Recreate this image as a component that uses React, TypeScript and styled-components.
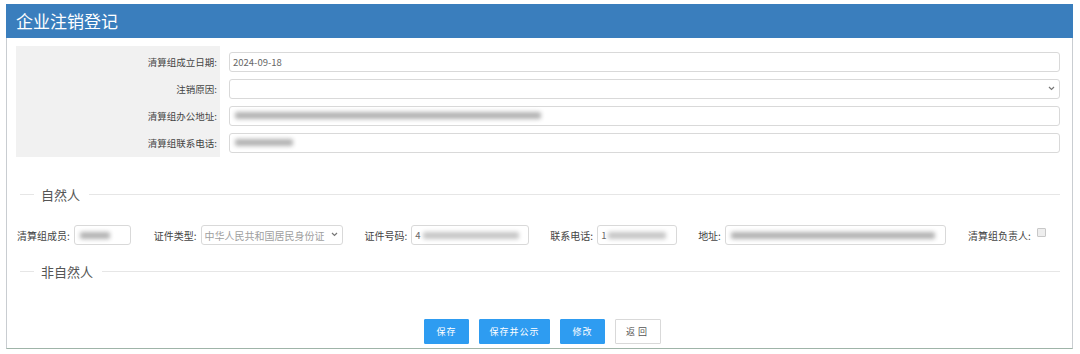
import React from "react"
import styled, { createGlobalStyle } from "styled-components"

const GlobalStyle = createGlobalStyle`
  body {
    margin: 0;
    background: #ffffff;
    font-family: "Noto Sans CJK SC", "Noto Sans", sans-serif;
    color: #333;
  }
`

const Panel = styled.div`
  margin: 4px 0 0 6px;
  width: 1067px;
  height: 345px;
  box-sizing: border-box;
  border: 1px solid #c9cdd1;
  border-top: none;
  border-bottom-color: #9fb4a8;
  display: flex;
  flex-direction: column;
`

const Header = styled.div`
  height: 34px;
  background: #3a7ebd;
  color: #ffffff;
  font-size: 17px;
  line-height: 34px;
  padding-left: 10px;
  margin: 0 -1px;
`

const TopBlock = styled.div`
  margin: 8px 12px 0 9px;
  padding: 2px 0 1px;
  display: grid;
  grid-template-columns: 204px 1fr;
  column-gap: 9px;
  background: linear-gradient(to right, #f1f1f1 204px, transparent 204px);
`

const TopLabel = styled.div`
  height: 27px;
  display: flex;
  align-items: center;
  justify-content: flex-end;
  padding-right: 3px;
  font-size: 9.5px;
  color: #444;
`

const TopCell = styled.div`
  height: 27px;
  display: flex;
  align-items: center;
`

const Field = styled.div<{ $w?: number }>`
  position: relative;
  box-sizing: border-box;
  height: 20px;
  width: ${(p) => (p.$w ? `${p.$w}px` : "100%")};
  border: 1px solid #d9d9d9;
  border-radius: 3px;
  background: #fff;
  display: flex;
  align-items: center;
  padding-left: 3px;
  font-size: 9.5px;
  color: #666;
  overflow: hidden;
  flex-shrink: 0;
`

const Chevron = styled.svg`
  position: absolute;
  right: 4px;
  top: 50%;
  margin-top: -3px;
`

const Blur = styled.span<{ $w: number; $dark?: boolean }>`
  display: inline-block;
  width: ${(p) => p.$w}px;
  height: 7px;
  margin-left: 2px;
  background: ${(p) => (p.$dark ? "#b3b3b3" : "#c6c6c6")};
  filter: blur(2px);
  border-radius: 2px;
`

const Legend = styled.div<{ $top: number }>`
  margin: ${(p) => p.$top}px 12px 0 13px;
  display: flex;
  align-items: center;
  gap: 7px;
  font-size: 13px;
  color: #555;
  &::before {
    content: "";
    width: 14px;
    border-top: 1px solid #e6e6e6;
  }
  &::after {
    content: "";
    flex: 1;
    border-top: 1px solid #e6e6e6;
    margin-left: 2px;
  }
`

const PersonRow = styled.div`
  margin: 21px 0 0 10px;
  display: flex;
  align-items: center;
`

const Group = styled.div<{ $gap: number }>`
  display: flex;
  align-items: center;
  margin-right: ${(p) => p.$gap}px;
`

const RowLabel = styled.span`
  font-size: 10px;
  color: #444;
  margin-right: 4px;
  white-space: nowrap;
`

const SelectText = styled.span`
  font-size: 10px;
  color: #a0a0a0;
  white-space: nowrap;
`

const Check = styled.span`
  width: 7px;
  height: 7px;
  border: 1px solid #c8c8c8;
  background: #eee;
  border-radius: 1px;
  margin: -6px 0 0 2px;
`

const ButtonBar = styled.div`
  margin-top: 38px;
  display: flex;
  justify-content: center;
  gap: 10px;
  padding-left: 6px;
`

const Button = styled.button<{ $w: number; $plain?: boolean }>`
  width: ${(p) => p.$w}px;
  height: 25px;
  border: 1px solid ${(p) => (p.$plain ? "#d9d9d9" : "#2e9cf1")};
  background: ${(p) => (p.$plain ? "#fff" : "#2e9cf1")};
  color: ${(p) => (p.$plain ? "#555" : "#fff")};
  font-family: "Noto Sans CJK SC", sans-serif;
  font-size: 9px;
  letter-spacing: ${(p) => (p.$plain ? "3px" : "1px")};
  border-radius: 1px;
  padding: 0;
`

const Arrow = () => (
  <Chevron width="7" height="5" viewBox="0 0 7 5">
    <path d="M1 1 L3.5 3.5 L6 1" fill="none" stroke="#777" strokeWidth="1.2" />
  </Chevron>
)

const App = () => {
  return (
    <>
      <GlobalStyle />
      <Panel>
        <Header>企业注销登记</Header>
        <TopBlock>
          <TopLabel>清算组成立日期:</TopLabel>
          <TopCell>
            <Field>2024-09-18</Field>
          </TopCell>
          <TopLabel>注销原因:</TopLabel>
          <TopCell>
            <Field>
              <Arrow />
            </Field>
          </TopCell>
          <TopLabel>清算组办公地址:</TopLabel>
          <TopCell>
            <Field>
              <Blur $w={306} $dark />
            </Field>
          </TopCell>
          <TopLabel>清算组联系电话:</TopLabel>
          <TopCell>
            <Field>
              <Blur $w={58} $dark />
            </Field>
          </TopCell>
        </TopBlock>

        <Legend $top={28}>自然人</Legend>

        <PersonRow>
          <Group $gap={23}>
            <RowLabel>清算组成员:</RowLabel>
            <Field $w={57}>
              <Blur $w={30} $dark />
            </Field>
          </Group>
          <Group $gap={22}>
            <RowLabel>证件类型:</RowLabel>
            <Field $w={142}>
              <SelectText>中华人民共和国居民身份证</SelectText>
              <Arrow />
            </Field>
          </Group>
          <Group $gap={21}>
            <RowLabel>证件号码:</RowLabel>
            <Field $w={118}>
              4<Blur $w={96} />
            </Field>
          </Group>
          <Group $gap={21}>
            <RowLabel>联系电话:</RowLabel>
            <Field $w={80}>
              1<Blur $w={58} />
            </Field>
          </Group>
          <Group $gap={22}>
            <RowLabel>地址:</RowLabel>
            <Field $w={221}>
              <Blur $w={204} $dark />
            </Field>
          </Group>
          <Group $gap={0}>
            <RowLabel>清算组负责人:</RowLabel>
            <Check />
          </Group>
        </PersonRow>

        <Legend $top={17}>非自然人</Legend>

        <ButtonBar>
          <Button $w={45}>保存</Button>
          <Button $w={71}>保存并公示</Button>
          <Button $w={45}>修改</Button>
          <Button $w={46} $plain>
            返回
          </Button>
        </ButtonBar>
      </Panel>
    </>
  )
}

export default App
